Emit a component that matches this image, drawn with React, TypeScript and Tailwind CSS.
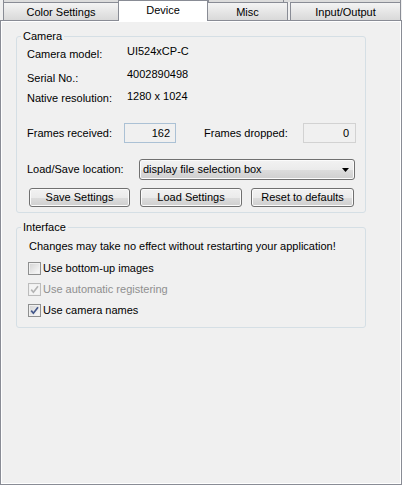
import React from "react";

const font = "font-['Liberation_Sans',Arial,sans-serif]";
const btnBg =
  "border border-[#707070] rounded-[3px] bg-[linear-gradient(#f2f2f2,#ebebeb_50%,#dddddd_51%,#cfcfcf)] shadow-[inset_0_0_0_1px_#fbfbfb]";

function Check({ checked, disabled }: { checked?: boolean; disabled?: boolean }) {
  return (
    <div
      className={`w-[13px] h-[13px] border p-[1px] ${
        disabled ? "border-[#bcbcbc]" : "border-[#8e8f8f]"
      }`}
    >
      <div
        className={`w-full h-full ${
          disabled
            ? "bg-[#f4f4f4]"
            : "bg-linear-to-br from-[#d6d6d6] to-[#f8f8f8]"
        }`}
      >
        {checked && (
          <svg width="9" height="9" viewBox="0 0 9 9">
            <path
              d="M1.2 4.6 L3.4 7.2 L8 1.2"
              fill="none"
              stroke={disabled ? "#b4b4b4" : "#43578a"}
              strokeWidth="1.7"
            />
          </svg>
        )}
      </div>
    </div>
  );
}

export default function App() {
  return (
    <div
      className={`w-[402px] h-[485px] bg-[#f0f0f0] flex flex-col text-[11px] leading-[13px] text-black ${font}`}
    >
      {/* back row of tabs */}
      <div className="flex h-[2px] pl-[3px]">
        <div className="w-[116px] bg-[#dcdcdc] border-l border-r border-[#898c95]" />
        <div className="w-[90px] bg-[#dcdcdc] border-r border-[#898c95]" />
        <div className="w-[75px] bg-[#dcdcdc] border-r border-[#898c95]" />
        <div className="w-[117px] bg-[#dcdcdc] border-r border-[#898c95]" />
      </div>

      {/* front row of tabs */}
      <div className="flex h-[18px] pl-[3px] items-start">
        <div className="w-[115px] h-[18px] border-l border-t border-[#898c95] bg-linear-to-b from-[#f4f4f4] to-[#d9d9d9] text-center pt-[3px]">
          Color Settings
        </div>
        <div className="relative z-10 -mt-[2px] w-[90px] h-[21px] border-x border-t border-[#898c95] bg-white text-center pt-[3px]">
          Device
        </div>
        <div className="w-[80px] h-[18px] border-t border-r border-[#898c95] bg-linear-to-b from-[#f4f4f4] to-[#d9d9d9] text-center pt-[3px]">
          Misc
        </div>
        <div className="ml-[2px] w-[111px] h-[18px] border-x border-t border-[#898c95] bg-linear-to-b from-[#f4f4f4] to-[#d9d9d9] text-center pt-[3px]">
          Input/Output
        </div>
      </div>

      {/* tab page */}
      <div className="flex-1 border border-[#898c95] shadow-[inset_1px_1px_0_#fff,inset_-1px_-1px_0_#fff] pl-[15px]">
        <fieldset className="mt-[9px] w-[350px] border border-[#d5dfe5] rounded-[3px] pl-[10px] pr-[9px] pb-[5px]">
          <legend className="-ml-[6px] px-[2px] leading-[13px]">Camera</legend>

          <div className="mt-[2px] h-[23px] flex items-start">
            <div className="w-[100px] pt-[3px]">Camera model:</div>
            <div>UI524xCP-C</div>
          </div>
          <div className="h-[22px] flex items-start">
            <div className="w-[100px] pt-[4px]">Serial No.:</div>
            <div>4002890498</div>
          </div>
          <div className="h-[13px] flex items-start">
            <div className="w-[100px] pt-[2px]">Native resolution:</div>
            <div>1280 x 1024</div>
          </div>

          <div className="mt-[20px] h-[20px] flex items-center">
            <div className="w-[97px]">Frames received:</div>
            <div className="w-[52px] h-[20px] border border-[#abc1d5] bg-[#f0f0f0] text-right pr-[5px] leading-[18px]">
              162
            </div>
            <div className="ml-[28px] w-[99px]">Frames dropped:</div>
            <div className="w-[53px] h-[20px] border border-[#d2d2d2] bg-[#f0f0f0] text-right pr-[6px] leading-[18px]">
              0
            </div>
          </div>

          <div className="mt-[16px] h-[21px] flex items-center">
            <div className="w-[112px]">Load/Save location:</div>
            <div className={`w-[216px] h-[21px] flex items-center justify-between pl-[3px] pr-[5px] ${btnBg}`}>
              <span>display file selection box</span>
              <svg width="7" height="4" viewBox="0 0 7 4">
                <path d="M0 0 H7 L3.5 4 Z" fill="#000" />
              </svg>
            </div>
          </div>

          <div className="mt-[8px] h-[19px] flex">
            <div className={`ml-[2px] w-[101px] h-[19px] flex items-center justify-center ${btnBg}`}>
              Save Settings
            </div>
            <div className={`ml-[10px] w-[102px] h-[19px] flex items-center justify-center ${btnBg}`}>
              Load Settings
            </div>
            <div className={`ml-[9px] w-[103px] h-[19px] flex items-center justify-center ${btnBg}`}>
              Reset to defaults
            </div>
          </div>
        </fieldset>

        <fieldset className="mt-[8px] w-[350px] border border-[#d5dfe5] rounded-[3px] pl-[11px] pb-[6px]">
          <legend className="-ml-[7px] px-[2px] leading-[13px]">Interface</legend>
          <div className="mt-[6px] ml-[1px]">
            Changes may take no effect without restarting your application!
          </div>
          <div className="mt-[5px] h-[21px] flex items-center gap-[2px]">
            <Check />
            <span>Use bottom-up images</span>
          </div>
          <div className="h-[21px] flex items-center gap-[2px]">
            <Check checked disabled />
            <span className="text-[#8f8f8f]">Use automatic registering</span>
          </div>
          <div className="h-[21px] flex items-center gap-[2px]">
            <Check checked />
            <span>Use camera names</span>
          </div>
        </fieldset>
      </div>
    </div>
  );
}
